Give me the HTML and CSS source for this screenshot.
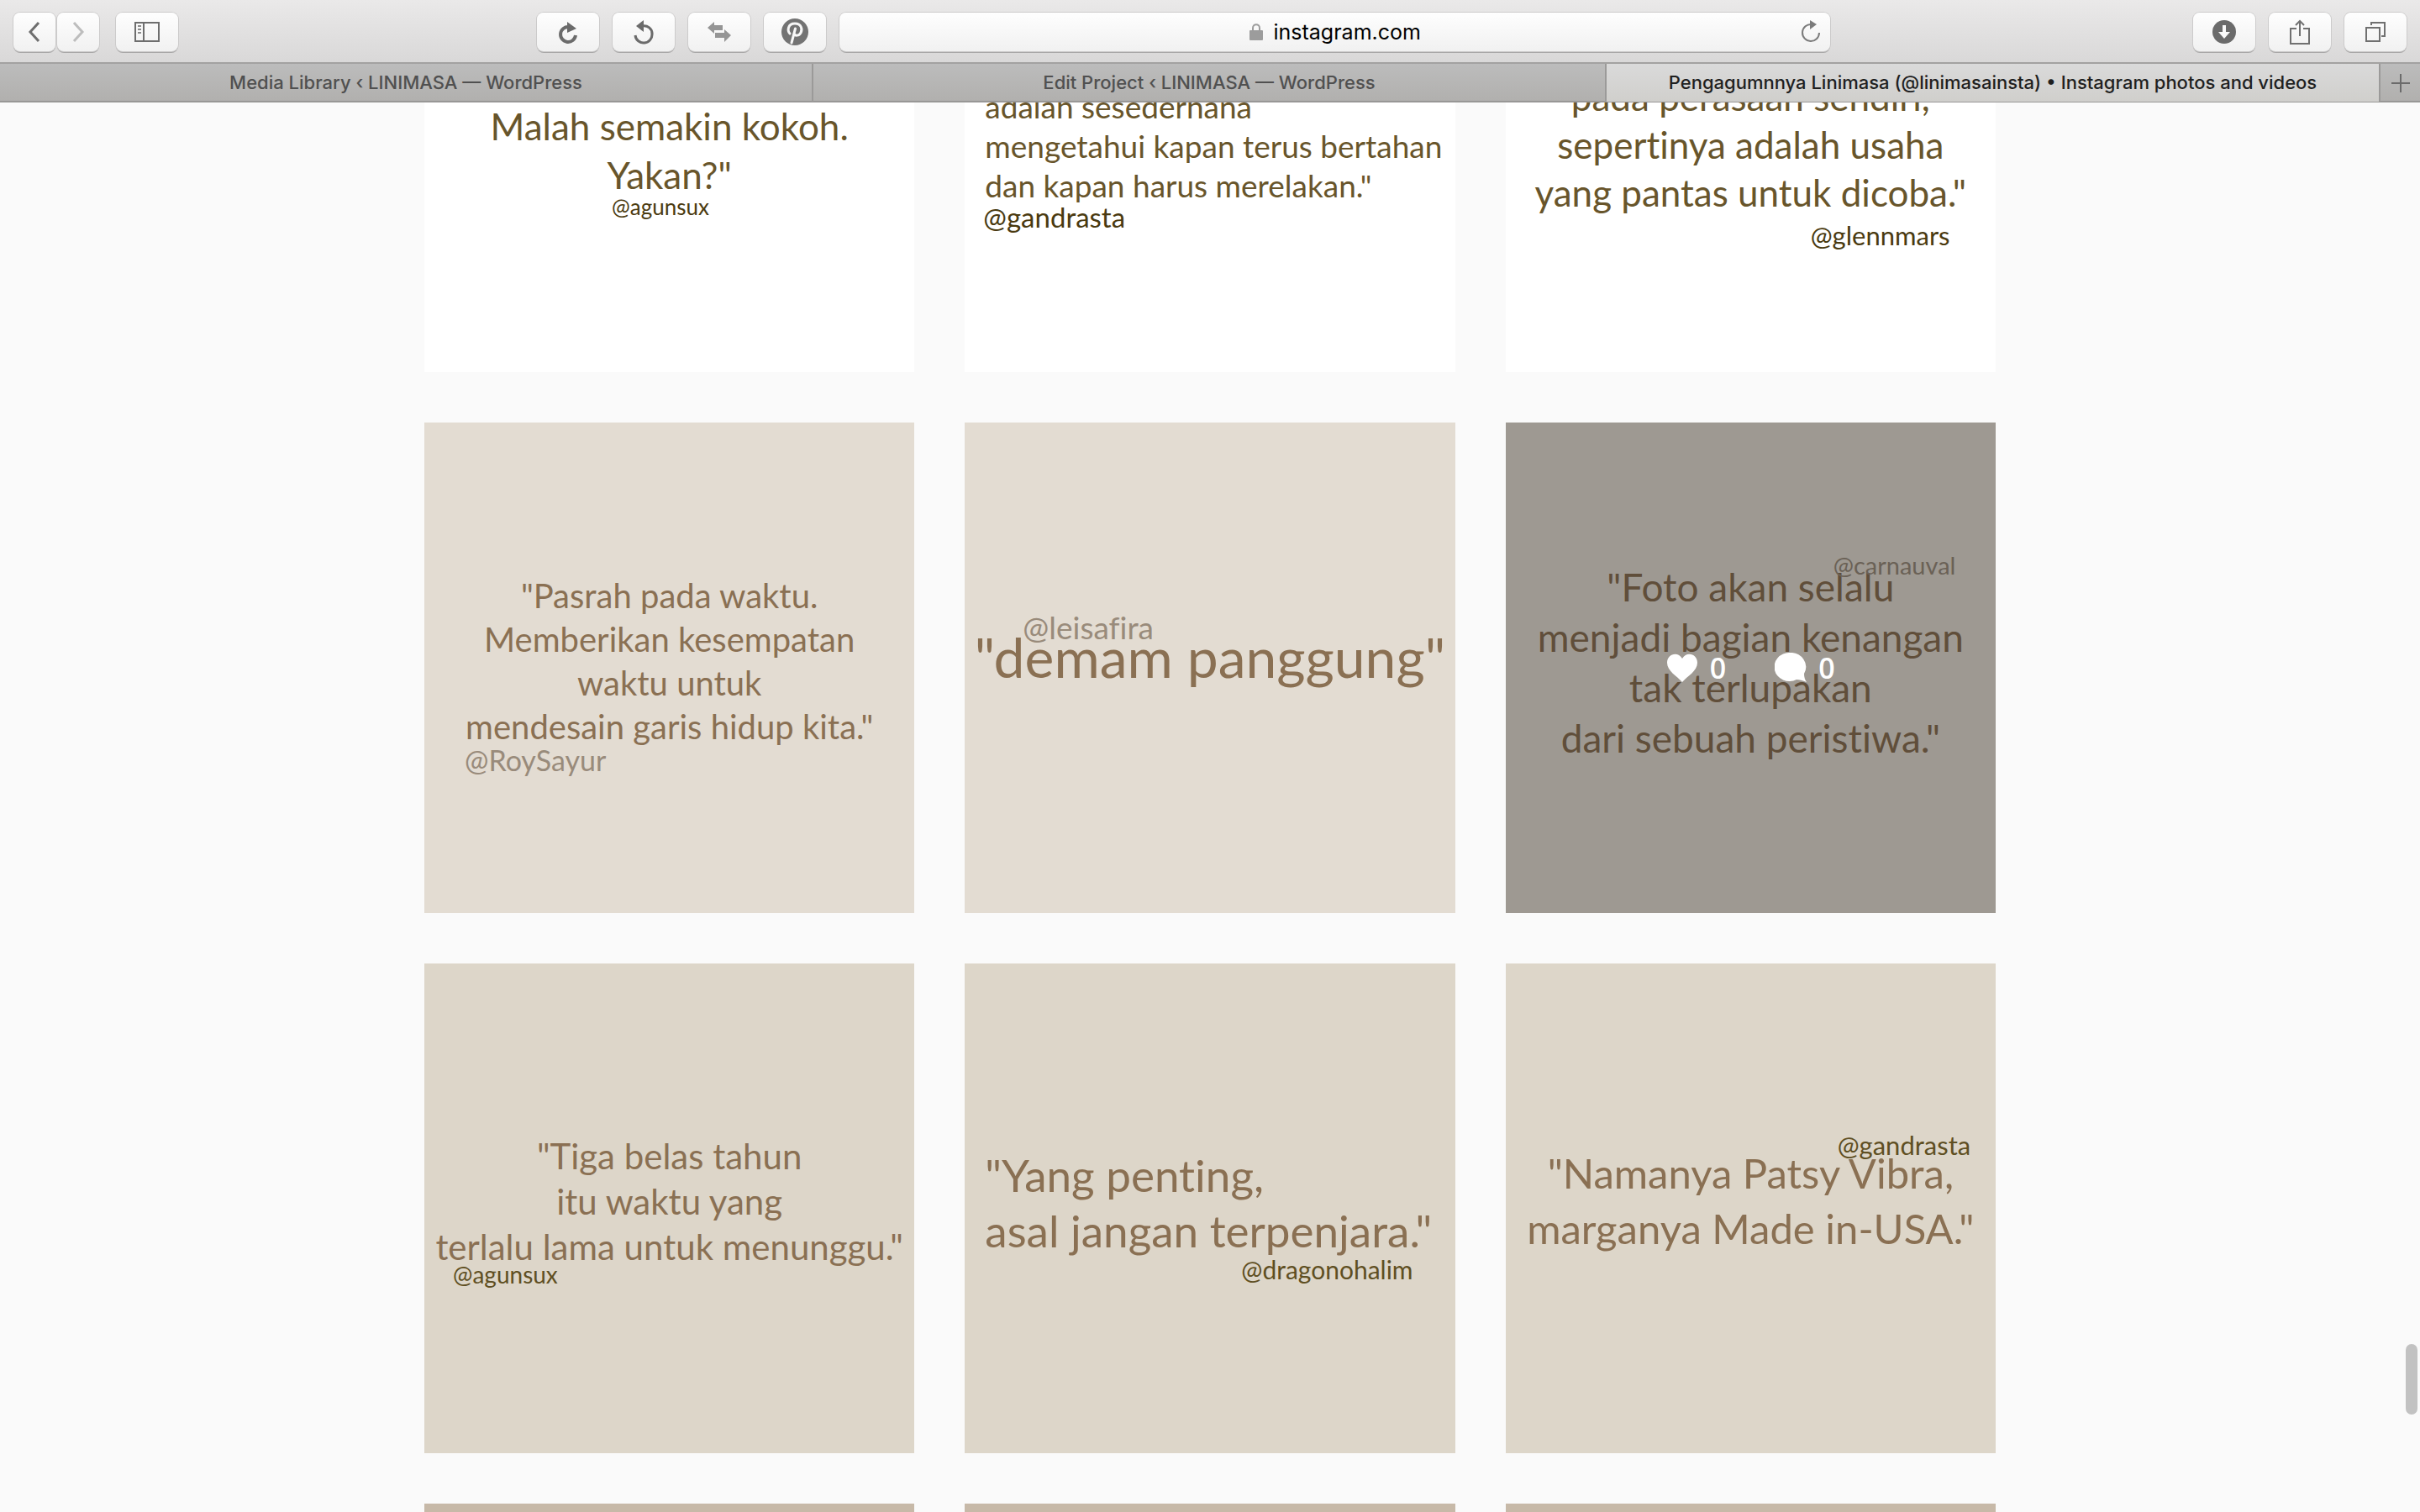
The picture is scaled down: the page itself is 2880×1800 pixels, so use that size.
FILE: index.html
```html
<!DOCTYPE html>
<html lang="id">
    <head>
        <meta charset="utf-8">
        <title>Pengagumnnya Linimasa (@linimasainsta) • Instagram photos and videos</title>
        <link rel="stylesheet" href="styles.css">
    </head>
    <body>
        <header class="browser">
            <div class="toolbar">
                <div class="tools tools-left">
                    <div class="pair">
                        <button class="tool narrow" type="button" aria-label="Back">
                            <svg width="16" height="28" viewBox="0 0 16 28"><path d="M13 3 3 14l10 11" fill="none" stroke="#6e6e6e" stroke-width="3"/></svg>
                        </button>
                        <button class="tool narrow" type="button" aria-label="Forward">
                            <svg width="16" height="28" viewBox="0 0 16 28"><path d="M3 3l10 11L3 25" fill="none" stroke="#bdbdbd" stroke-width="3"/></svg>
                        </button>
                    </div>
                    <button class="tool" type="button" aria-label="Sidebar">
                        <svg width="32" height="26" viewBox="0 0 32 26"><path d="M2 2h28v22H2zM12 2v22" fill="none" stroke="#6e6e6e" stroke-width="2"/><path d="M5 6h4M5 10h4M5 14h4" stroke="#8a8a8a" stroke-width="2"/></svg>
                    </button>
                </div>
                <div class="tools">
                    <button class="tool" type="button" aria-label="Redo">
                        <svg width="28" height="32" viewBox="0 0 28 32"><path d="M15 10A9 9 0 1 0 23 20" fill="none" stroke="#6b6b6b" stroke-width="4"/><path d="M13 4v13l11-5z" fill="#6b6b6b"/></svg>
                    </button>
                    <button class="tool" type="button" aria-label="Undo">
                        <svg width="28" height="32" viewBox="0 0 28 32"><path d="M12 9c7-1 12 3 12 9a10 10 0 0 1-20 2" fill="none" stroke="#6b6b6b" stroke-width="3"/><path d="M14 2v14L5 9z" fill="#6b6b6b"/></svg>
                    </button>
                    <button class="tool" type="button" aria-label="Switch">
                        <svg width="30" height="26" viewBox="0 0 30 26"><path d="M1 8l8-7v4h10v6H9v4zM29 17l-8-7v4H10v6h11v5z" fill="#959595"/></svg>
                    </button>
                    <button class="tool" type="button" aria-label="Pin it">
                        <svg width="34" height="34" viewBox="0 0 34 34"><circle cx="17" cy="17" r="16" fill="#737373"/><path d="M11 19c-3-3-3-12 6-12 8 0 9 7 7 11-2 4-7 4-8 1M17.500 13 13 30" fill="none" stroke="#f7f7f7" stroke-width="3" stroke-linecap="round"/></svg>
                    </button>
                </div>
                <form class="address">
                    <label class="lock" for="url" aria-label="Address">
                        <svg width="18" height="22" viewBox="0 0 18 22"><path d="M5 11V6.500C5 0.800 13 0.800 13 6.500V11" fill="none" stroke="#9c9c9c" stroke-width="2"/><rect x="1" y="9" width="16" height="12" rx="1" fill="#9c9c9c"/></svg>
                    </label>
                    <input id="url" class="url" type="text" value="instagram.com">
                    <button class="reload" type="button" aria-label="Reload">
                        <svg width="26" height="28" viewBox="0 0 26 28"><path d="M14 6A10 10 0 1 0 23 16" fill="none" stroke="#7b7b7b" stroke-width="2"/><path d="M12 1v11l8-6z" fill="#7b7b7b"/></svg>
                    </button>
                </form>
                <div class="tools tools-right">
                    <button class="tool" type="button" aria-label="Downloads">
                        <svg width="30" height="30" viewBox="0 0 30 30"><circle cx="15" cy="15" r="14" fill="#6b6b6b"/><path d="M13 7h4v8h5l-7 8-7-8h5z" fill="#fafafa"/></svg>
                    </button>
                    <button class="tool" type="button" aria-label="Share">
                        <svg width="26" height="32" viewBox="0 0 26 32"><path d="M9 12H2v18h22V12h-7M13 21V3M8 8l5-5 5 5" fill="none" stroke="#707070" stroke-width="2"/></svg>
                    </button>
                    <button class="tool" type="button" aria-label="Tabs">
                        <svg width="26" height="26" viewBox="0 0 26 26"><path d="M2 8h16v16H2zM8 5V2h16v16h-4" fill="none" stroke="#707070" stroke-width="2"/></svg>
                    </button>
                </div>
            </div>
            <nav class="tabs">
                <a class="tab" href="#">Media Library ‹ LINIMASA — WordPress</a>
                <a class="tab" href="#">Edit Project ‹ LINIMASA — WordPress</a>
                <a class="tab active" href="#">Pengagumnnya Linimasa (@linimasainsta) • Instagram photos and videos</a>
                <button class="newtab" type="button" aria-label="New tab">
                    <svg width="24" height="24" viewBox="0 0 24 24"><path d="M12 1v22M1 12h22" stroke="#6b6b6b" stroke-width="2"/></svg>
                </button>
            </nav>
        </header>

        <main class="page">
            <div class="grid">
                <a class="post white" href="#">
                    <p class="quote q42"><br>Malah semakin kokoh.<br>Yakan?"</p>
                    <span class="by by1">@agunsux</span>
                </a>
                <a class="post white" href="#">
                    <p class="quote q36 left"><br>adalah sesederhana<br>mengetahui kapan terus bertahan<br>dan kapan harus merelakan."</p>
                    <span class="by by2">@gandrasta</span>
                </a>
                <a class="post white" href="#">
                    <p class="quote q43"><br>pada perasaan sendiri,<br>sepertinya adalah usaha<br>yang pantas untuk dicoba."</p>
                    <span class="by by3">@glennmars</span>
                </a>

                <a class="post cream" href="#">
                    <p class="quote q38">"Pasrah pada waktu.<br>Memberikan kesempatan<br>waktu untuk<br>mendesain garis hidup kita."</p>
                    <span class="by by4">@RoySayur</span>
                </a>
                <a class="post cream" href="#">
                    <p class="quote q64">"demam panggung"</p>
                    <span class="by by5">@leisafira</span>
                </a>
                <a class="post cream" href="#">
                    <p class="quote q44">"Foto akan selalu<br>menjadi bagian kenangan<br>tak terlupakan<br>dari sebuah peristiwa."</p>
                    <span class="by by6">@carnauval</span>
                    <span class="hover">
                        <span class="stat">
                            <svg width="38" height="36" viewBox="0 0 38 36"><path d="M19 35C13 28 1 22 1 12 1 1 14-2 19 7 24-2 37 1 37 12c0 10-12 16-18 23z" fill="#fff"/></svg>
                            0
                        </span>
                        <span class="stat">
                            <svg width="38" height="36" viewBox="0 0 38 36"><path d="M18 0a18 17 0 1 0 8 32q5 0 12 3-3-4-3-10A18 17 0 0 0 18 0z" fill="#fff"/></svg>
                            0
                        </span>
                    </span>
                </a>

                <a class="post sand" href="#">
                    <p class="quote q40">"Tiga belas tahun<br>itu waktu yang<br>terlalu lama untuk menunggu."</p>
                    <span class="by by7">@agunsux</span>
                </a>
                <a class="post sand" href="#">
                    <p class="quote q50 left">"Yang penting,<br>asal jangan terpenjara."</p>
                    <span class="by by8">@dragonohalim</span>
                </a>
                <a class="post sand" href="#">
                    <p class="quote q48">"Namanya Patsy Vibra,<br>marganya Made in-USA."</p>
                    <span class="by by9">@gandrasta</span>
                </a>

                <a class="post brown" href="#" aria-label="Post"></a>
                <a class="post brown" href="#" aria-label="Post"></a>
                <a class="post brown" href="#" aria-label="Post"></a>
            </div>
            <div class="scrollbar"></div>
        </main>
    </body>
</html>
```
FILE: styles.css
```css
* {
  box-sizing: border-box;
}

body {
  margin: 0;
  height: 100vh;
  display: flex;
  flex-direction: column;
  overflow: hidden;
  background-color: #fafafa;
  font-family: Inter, "Liberation Sans", sans-serif;
}

a {
  color: inherit;
  text-decoration: none;
}

button, input {
  font-family: inherit;
  padding: 0;
  border: 0;
  background: none;
}

svg {
  display: block;
}

/* browser bar */
.toolbar {
  display: flex;
  align-items: center;
  height: 74px;
  padding: 2px 16px 0;
  background: linear-gradient(#eae9e9, #d9d8d8);
}

.tools {
  display: flex;
  gap: 16px;
}

.tools-left {
  width: 623px;
  gap: 20px;
}

.tools-right {
  margin-left: auto;
}

.pair {
  display: flex;
  gap: 2px;
}

.tool, .address {
  height: 46px;
  border-radius: 8px;
  background: linear-gradient(#fefefe, #f1f1f1);
  box-shadow: 0 0 0 1px #cccbcb, 0 2px 0 #a9a8a8;
}

.tool {
  display: flex;
  align-items: center;
  justify-content: center;
  width: 74px;
}

.tool.narrow {
  width: 50px;
}

.address {
  display: flex;
  align-items: center;
  justify-content: center;
  position: relative;
  flex: 1;
  margin-left: 16px;
}

.lock {
  margin-right: 12px;
}

.url {
  width: 176px;
  font-size: 25px;
  line-height: 32px;
  color: #000;
}

.reload {
  position: absolute;
  right: 10px;
  top: 8px;
}

.tools-right {
  margin-left: 432px;
}

/* tabs */
.tabs {
  display: grid;
  grid-template-columns: 968fr 944fr 921fr 47px;
  height: 48px;
  border-top: 2px solid #a3a2a1;
  border-bottom: 2px solid #989796;
  background: linear-gradient(#bcbcbc, #b1b0ae);
}

.tab {
  border-right: 2px solid #9b9a99;
  font-size: 22px;
  font-weight: 500;
  line-height: 45px;
  text-align: center;
  color: #505050;
}

.tab.active {
  background: linear-gradient(#dadada, #d0cfcc);
  color: #1f1f1f;
}

.newtab {
  display: flex;
  align-items: center;
  justify-content: center;
}

/* posts, page is scrolled part way down */
.page {
  flex: 1;
  min-height: 0;
  position: relative;
  overflow: hidden;
}

.grid {
  display: grid;
  grid-template-columns: repeat(3, 1fr);
  gap: 60px;
  width: 90%;
  max-width: 1870px;
  margin: -262px auto 0;
}

.post {
  position: relative;
  display: flex;
  flex-direction: column;
  justify-content: center;
  aspect-ratio: 1;
  padding-bottom: 12px;
  font-family: Lato, "Liberation Sans", sans-serif;
  font-variant-ligatures: none;
  white-space: nowrap;
}

.white { background-color: #fff; color: #68552b; padding-bottom: 4px; }
.cream { background-color: #e3dcd2; color: #8a7053; }
.sand { background-color: #ddd6c9; color: #8a7053; }
.brown { background-color: #c7b9a8; }

.quote {
  margin: 0;
  text-align: center;
}

.quote.left {
  text-align: left;
  padding-left: 24px;
}

.q36 { font-size: 37px; line-height: 47px; }
.q38 { font-size: 40px; line-height: 52px; padding-bottom: 4px; }
.q40 { font-size: 42px; line-height: 54px; padding-bottom: 4px; }
.q42 { font-size: 44px; line-height: 58px; }
.q43 { font-size: 44px; line-height: 57px; padding-bottom: 12px; }
.q44 { font-size: 46px; line-height: 60px; }
.q48 { font-size: 49px; line-height: 66px; padding-bottom: 6px; }
.q50 { font-size: 53px; line-height: 66px; }
.q64 { font-size: 66px; line-height: 72px; padding-bottom: 14px; }

/* credit written over the picture */
.by {
  position: absolute;
  font-size: 31px;
  line-height: 40px;
}

.white .by { color: #4a3a10; }
.cream .by { color: #998b7b; }
.sand .by { color: #5f4f22; }

.by1 { left: 223px; top: 366px; font-size: 26px; }
.by2 { left: 22px; top: 378px; font-size: 33px; }
.by3 { left: 363px; top: 400px; }
.by4 { left: 48px; top: 382px; font-size: 34px; }
.by5 { left: 69px; top: 224px; font-size: 37px; }
.by6 { left: 390px; top: 150px; font-size: 29px; }
.by7 { left: 34px; top: 350px; font-size: 28px; }
.by8 { left: 329px; top: 344px; font-size: 30px; }
.by9 { left: 395px; top: 196px; }

.hover {
  position: absolute;
  inset: 0;
  display: flex;
  align-items: center;
  justify-content: center;
  gap: 58px;
  background-color: rgba(0, 0, 0, 0.3);
}

.stat {
  display: flex;
  align-items: center;
  gap: 14px;
  font-family: "Open Sans", sans-serif;
  font-size: 34px;
  font-weight: 600;
  line-height: 36px;
  color: #fff;
}

.scrollbar {
  position: absolute;
  right: 3px;
  top: 1478px;
  width: 14px;
  height: 84px;
  border-radius: 7px;
  background-color: #c2c2c2;
}
```
